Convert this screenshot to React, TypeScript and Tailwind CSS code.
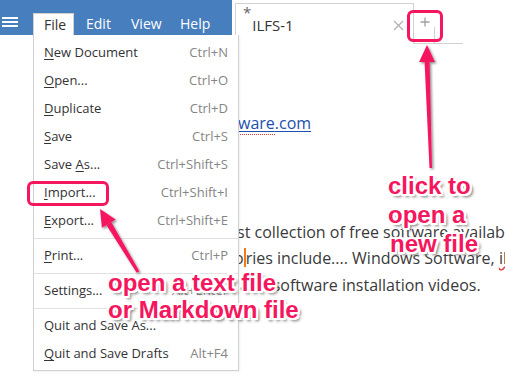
import React from "react";

const PINK = "#f5175e";

const items: { pre?: string; u: string; post: string; sc: string }[] = [
  { u: "N", post: "ew Document", sc: "Ctrl+N" },
  { u: "O", post: "pen...", sc: "Ctrl+O" },
  { u: "D", post: "uplicate", sc: "Ctrl+D" },
  { u: "S", post: "ave", sc: "Ctrl+S" },
  { pre: "Save ", u: "A", post: "s...", sc: "Ctrl+Shift+S" },
  { u: "I", post: "mport...", sc: "Ctrl+Shift+I" },
  { u: "E", post: "xport...", sc: "Ctrl+Shift+E" },
];

function Row({ pre, u, post, sc }: { pre?: string; u?: string; post: string; sc: string }) {
  return (
    <div className="flex h-[28px] items-center justify-between pl-[10px] pr-[10px] text-[13px]">
      <span className="text-[#333]">
        {pre}
        {u ? <span className="underline underline-offset-2">{u}</span> : null}
        {post}
      </span>
      <span className="text-[#858585]">{sc}</span>
    </div>
  );
}

function Sep() {
  return <div className="my-[3px] h-px bg-[#e2e2e2]" />;
}

export default function App() {
  return (
    <div
      className="relative h-[388px] w-[505px] overflow-hidden bg-white"
      style={{ fontFamily: '"Open Sans", "Noto Sans", sans-serif' }}
    >
      {/* header row */}
      <div className="flex h-[44px] items-start">
        <div className="flex h-[35px] w-[232px] items-end bg-[#477ebe]">
          <div className="flex h-[35px] w-[33px] flex-col justify-center gap-[2px] pl-[2px] pt-[9px]">
            <div className="h-[2px] w-[16px] bg-white" />
            <div className="h-[2px] w-[16px] bg-white" />
            <div className="h-[2px] w-[16px] bg-white" />
          </div>
          <div className="relative z-20 h-[22px] w-[41px] border-l border-r border-t border-[#d0d0d0] bg-white pl-[10px] text-[14px] leading-[21px] text-[#333]">
            File
          </div>
          <div className="h-[22px] w-[45px] pl-[12px] text-[14px] leading-[21px] text-white">Edit</div>
          <div className="h-[22px] w-[50px] pl-[12px] text-[14px] leading-[21px] text-white">View</div>
          <div className="h-[22px] pl-[11px] text-[14px] leading-[21px] text-white">Help</div>
        </div>
        {/* tab */}
        <div className="ml-[3px] mt-[3px] flex h-[41px] w-[179px] items-start border-l border-r border-t border-[#d2d2d2] bg-white pl-[7px]">
          <span className="mt-[1px] text-[15px] leading-none text-[#666]">*</span>
          <span className="ml-[1px] mt-[11px] text-[15px] leading-[20px] text-[#333]">ILFS-1</span>
          <svg className="ml-auto mr-[9px] mt-[16px]" width="11" height="11" viewBox="0 0 11 11">
            <path d="M1 1 L10 10 M10 1 L1 10" stroke="#b0b0b0" strokeWidth="1.2" />
          </svg>
        </div>
        {/* plus */}
        <div className="mt-[3px] flex h-[41px] w-[21px] flex-col border-b border-[#d2d2d2]">
          <div className="flex h-[24px] items-end justify-center pl-[1px]">
            <svg width="10" height="10" viewBox="0 0 10 10">
              <path d="M5 0.5 V9.5 M0.5 5 H9.5" stroke="#a0a0a0" strokeWidth="1.3" />
            </svg>
          </div>
          <div className="h-[16px] border-r border-[#d2d2d2]" />
        </div>
        <div className="mt-[3px] h-[41px] w-[28px] border-b border-[#d2d2d2]" />
      </div>

      {/* editor text */}
      <div className="whitespace-nowrap text-[16px] leading-[26px] text-[#3a3a3a]">
        <div className="mt-[66px] pl-[238px]">
          <span className="text-[#1d4fae] underline underline-offset-2">
            <span className="border-b border-dotted border-[#e03a3a]">ware</span>.com
          </span>
        </div>
        <div className="mt-[83px] pl-[237px]">st collection of free software available</div>
        <div className="pl-[234px]">
          o<span className="inline-block h-[19px] w-[2px] translate-y-[3px] bg-[#f07a1e]" />ries include.... Windows Software,{" "}
          <span className="underline decoration-wavy decoration-[#e03a3a]">il</span>
        </div>
        <div className="mt-[1px] pl-[240px]">and software installation videos.</div>
      </div>

      {/* dropdown menu */}
      <div className="absolute left-[33px] top-[35px] z-10 w-[206px] border border-t-0 border-[#d0d0d0] bg-white pb-[2px] pt-[4px] shadow-[1px_1px_2px_rgba(0,0,0,0.06)]">
        {items.map((it, i) => (
          <Row key={i} {...it} />
        ))}
        <Sep />
        <Row u="P" post="rint..." sc="Ctrl+P" />
        <Sep />
        <Row post="Settings..." sc="Alt+Enter" />
        <Sep />
        <Row post="Quit and Save As..." sc="" />
        <Row u="Q" post="uit and Save Drafts" sc="Alt+F4" />
      </div>

      {/* annotation boxes */}
      <div className="absolute left-[407px] top-[10px] z-30 h-[32px] w-[36px] rounded-[6px] border-[3px] border-[#f5175e]" />
      <div className="absolute left-[27px] top-[181px] z-30 h-[25px] w-[82px] rounded-[6px] border-[3px] border-[#f5175e]" />

      {/* arrows */}
      <svg className="pointer-events-none absolute left-0 top-0 z-30" width="505" height="388" viewBox="0 0 505 388">
        <defs>
          <filter id="sh" x="-20%" y="-20%" width="140%" height="140%">
            <feDropShadow dx="1.5" dy="1.5" stdDeviation="1.2" floodColor="#000" floodOpacity="0.45" />
          </filter>
        </defs>
        <g fill={PINK} filter="url(#sh)">
          <polygon points="427,45 419,62 435,62" />
          <polygon points="424.5,60 429.5,60 432,168 429.5,168" />
          <polygon points="100,209 101.9,227.7 115.7,219.5" />
          <polygon points="106.4,224.9 111.2,222.1 139.3,271.2 136.7,272.8" />
        </g>
      </svg>

      {/* annotation texts */}
      <div
        className="absolute left-[388px] top-[171px] z-30 whitespace-nowrap text-[24px] font-bold leading-[29px] text-[#f5175e] [text-shadow:-2px_-2px_0_#fff,2px_-2px_0_#fff,-2px_2px_0_#fff,2px_2px_0_#fff,0_2px_0_#fff,0_-2px_0_#fff,2px_0_0_#fff,-2px_0_0_#fff,3px_3px_3px_#666]"
        style={{ fontFamily: '"Liberation Sans", Arial, sans-serif' }}
      >
        <div>click to</div>
        <div>open a</div>
        <div className="pl-[2px]">new file</div>
      </div>
      <div
        className="absolute left-[108px] top-[269px] z-30 whitespace-nowrap text-[24px] font-bold leading-[27px] text-[#f5175e] [text-shadow:-2px_-2px_0_#fff,2px_-2px_0_#fff,-2px_2px_0_#fff,2px_2px_0_#fff,0_2px_0_#fff,0_-2px_0_#fff,2px_0_0_#fff,-2px_0_0_#fff,3px_3px_3px_#666]"
        style={{ fontFamily: '"Liberation Sans", Arial, sans-serif' }}
      >
        <div>open a text file</div>
        <div>or Markdown file</div>
      </div>
    </div>
  );
}
